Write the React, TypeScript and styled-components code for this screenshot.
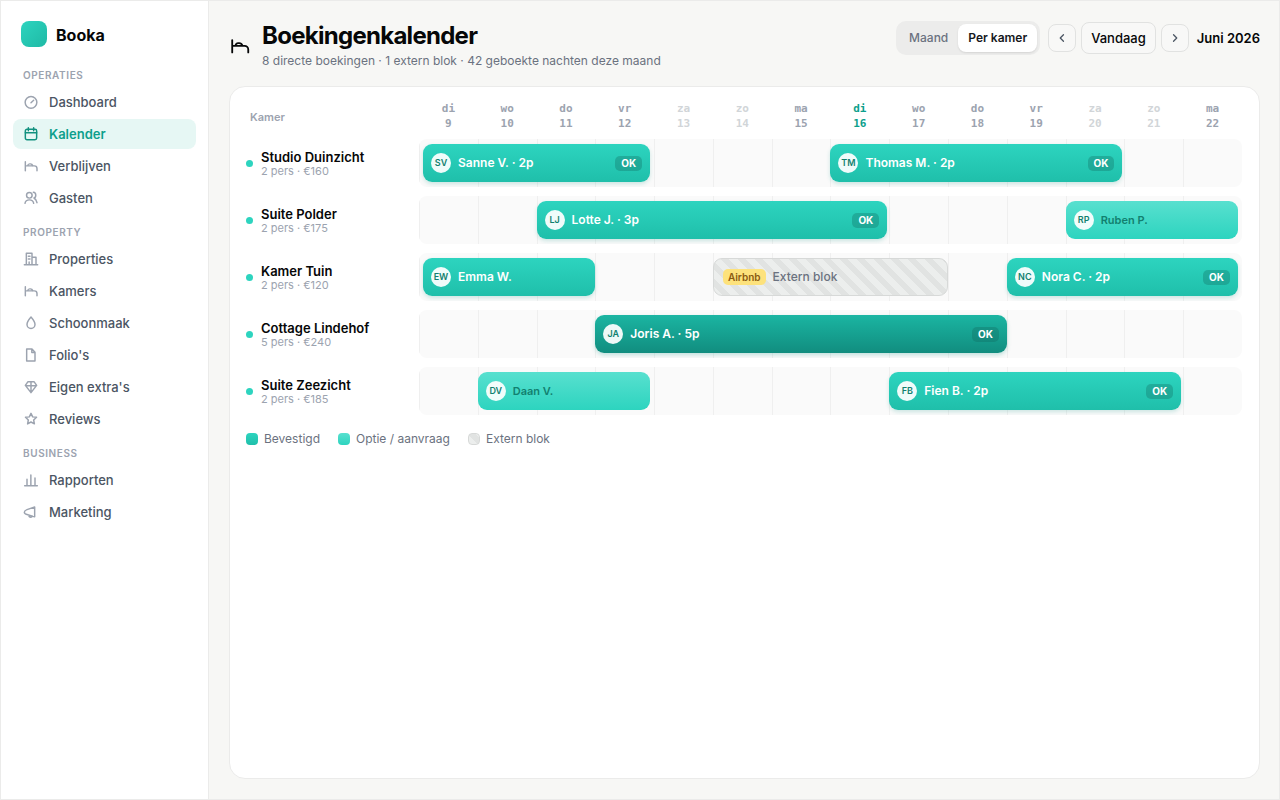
import React from "react";
import styled, { createGlobalStyle, css } from "styled-components";

const GlobalStyle = createGlobalStyle`
  *, *::before, *::after { box-sizing: border-box; }
  body {
    margin: 0;
    background: #f7f7f5;
    color: #060708;
    font-family: Inter, "Open Sans", "Liberation Sans", sans-serif;
    font-size: 13px;
    line-height: 20px;
  }
  button { font: inherit; color: inherit; cursor: pointer; margin: 0; }
  h1, h2, p, ul { margin: 0; padding: 0; }
`;

const Shell = styled.div`
  display: grid;
  grid-template-columns: 208px minmax(0, 1fr);
  min-height: 100vh;
  border: 1px solid #ebebea;
`;

const Sidebar = styled.aside`
  background: #fff;
  border-right: 1px solid #ebebea;
  padding: 20px 12px;
`;

const Brand = styled.div`
  display: flex;
  align-items: center;
  gap: 9px;
  padding: 0 8px;
  margin-bottom: 18px;
  font-size: 16px;
  line-height: 28px;
  font-weight: 700;
`;

const BrandMark = styled.span`
  align-self: flex-start;
  width: 26px;
  height: 26px;
  border-radius: 8px;
  background: linear-gradient(135deg, #2dd4bf, #1fb9a5);
`;

const NavSection = styled.section`
  & + & { margin-top: 11px; }
`;

const NavHeading = styled.h2`
  padding: 0 10px;
  margin-bottom: 4px;
  font-size: 10px;
  line-height: 16px;
  font-weight: 600;
  letter-spacing: 0.06em;
  text-transform: uppercase;
  color: #9ca3af;
`;

const NavList = styled.ul`
  display: flex;
  flex-direction: column;
  gap: 2px;
  list-style: none;
`;

const NavLink = styled.a<{ $active?: boolean }>`
  display: flex;
  align-items: center;
  gap: 10px;
  height: 30px;
  padding: 0 10px;
  border-radius: 8px;
  font-size: 13px;
  text-decoration: none;
  color: ${(p) => (p.$active ? "#0d9f8c" : "#4b5563")};
  font-weight: ${(p) => (p.$active ? 600 : 500)};
  background: ${(p) => (p.$active ? "#e6f7f4" : "transparent")};
  svg { color: ${(p) => (p.$active ? "#12917f" : "#9ca3af")}; flex: none; }
`;

const Main = styled.main`
  display: flex;
  flex-direction: column;
  padding: 20px 19px 20px 20px;
`;

const PageHeader = styled.header`
  display: flex;
  align-items: flex-start;
  justify-content: space-between;
  gap: 16px;
  margin-bottom: 15px;
`;

const Heading = styled.div`
  display: flex;
  align-items: center;
  gap: 11px;
`;

const Title = styled.h1`
  font-size: 24px;
  line-height: 30px;
  font-weight: 700;
  letter-spacing: -0.03em;
`;

const Subtitle = styled.p`
  font-size: 12px;
  line-height: 20px;
  color: #6b7280;
`;

const Toolbar = styled.div`
  display: flex;
  align-items: center;
  gap: 8px;
`;

const Segmented = styled.div`
  display: flex;
  padding: 3px;
  border-radius: 10px;
  background: #ececeb;
`;

const Segment = styled.button<{ $active?: boolean }>`
  height: 28px;
  padding: 0 10px;
  border: 0;
  border-radius: 8px;
  font-size: 12px;
  font-weight: ${(p) => (p.$active ? 600 : 500)};
  color: ${(p) => (p.$active ? "#16181c" : "#6b7280")};
  background: ${(p) => (p.$active ? "#fff" : "transparent")};
  box-shadow: ${(p) => (p.$active ? "0 1px 2px rgba(0, 0, 0, 0.1)" : "none")};
`;

const Stepper = styled.div`
  display: flex;
  align-items: center;
  gap: 5px;
`;

const outlined = css`
  border: 1px solid #e1e2e1;
  border-radius: 8px;
  background: #f8f8f7;
`;

const ArrowButton = styled.button`
  ${outlined}
  display: grid;
  place-items: center;
  width: 28px;
  height: 28px;
  padding: 0;
  color: #4b5563;
`;

const TodayButton = styled.button`
  ${outlined}
  height: 32px;
  padding: 0 9px;
  font-size: 13px;
  font-weight: 500;
`;

const Month = styled.span`
  font-size: 13px;
  font-weight: 600;
`;

const Card = styled.section`
  flex: 1;
  padding: 14px 17px 16px 16px;
  border: 1px solid #ebebea;
  border-radius: 16px;
  background: #fff;
`;

const RowLayout = styled.div`
  display: grid;
  grid-template-columns: 173px minmax(0, 1fr);
  align-items: center;
`;

const HeadRow = styled(RowLayout)`
  margin-bottom: 8px;
`;

const ColumnLabel = styled.span`
  padding: 2px 0 0 4px;
  font-size: 11px;
  font-weight: 600;
  color: #9ca3af;
`;

const Days = styled.div`
  display: grid;
  grid-template-columns: repeat(14, minmax(0, 1fr));
`;

type DayTone = "normal" | "weekend" | "today";
const dayColors: Record<DayTone, string> = {
  normal: "#9ca3af",
  weekend: "#d1d5d8",
  today: "#0d9f8c",
};

const Day = styled.div<{ $tone: DayTone }>`
  font-family: "DejaVu Sans Mono", "Liberation Mono", monospace;
  font-size: 11px;
  line-height: 15px;
  font-weight: 700;
  text-align: center;
  color: ${(p) => dayColors[p.$tone]};
`;

const Rooms = styled.div`
  display: flex;
  flex-direction: column;
  gap: 9px;
`;

const RoomLabel = styled.div`
  display: flex;
  align-items: center;
  gap: 8px;
`;

const Dot = styled.span`
  width: 7px;
  height: 7px;
  border-radius: 50%;
  background: #2dd4bf;
`;

const RoomText = styled.div`
  padding-top: 2px;
`;

const RoomName = styled.div`
  font-size: 13px;
  line-height: 15px;
  font-weight: 600;
`;

const RoomMeta = styled.div`
  font-size: 11px;
  line-height: 13px;
  color: #9ca3af;
`;

const Track = styled.div`
  display: grid;
  grid-template-columns: repeat(14, minmax(0, 1fr));
  grid-template-rows: 48px;
  align-items: center;
  overflow: hidden;
  border-radius: 8px;
  background: #fafafa;
`;

const Slot = styled.span<{ $column: number }>`
  grid-area: 1 / ${(p) => p.$column};
  height: 100%;
  border-left: 1px solid #efefef;
`;

type Kind = "confirmed" | "group" | "option" | "external";

const kindStyles = {
  confirmed: css`
    color: #fff;
    background: linear-gradient(180deg, #2dd4bf, #1fbfaa);
    box-shadow: 0 2px 4px rgba(20, 150, 135, 0.2);
  `,
  group: css`
    color: #fff;
    background: linear-gradient(180deg, #1bb5a2, #118d7f);
    box-shadow: 0 2px 4px rgba(20, 150, 135, 0.25);
  `,
  option: css`
    color: #12806f;
    background: linear-gradient(180deg, #58e0cf, #2dd4bf);
  `,
  external: css`
    color: #6b7280;
    border: 1px solid #d7d9d8;
    background: repeating-linear-gradient(45deg, #eceeed 0 6px, #e1e3e2 6px 12px);
  `,
};

const Bar = styled.button<{ $from: number; $to: number; $start: number; $end: number; $kind: Kind }>`
  grid-area: 1 / ${(p) => p.$from} / 2 / ${(p) => p.$to};
  z-index: 1;
  display: flex;
  align-items: center;
  gap: 7px;
  height: 38px;
  margin: 0 ${(p) => p.$end}px 0 ${(p) => p.$start}px;
  padding: 0 8px;
  border: 0;
  border-radius: 9px;
  text-align: left;
  white-space: nowrap;
  ${(p) => kindStyles[p.$kind]}
`;

const Avatar = styled.span`
  display: grid;
  place-items: center;
  width: 20px;
  height: 20px;
  border-radius: 50%;
  font-size: 9px;
  line-height: 20px;
  font-weight: 600;
  color: #12806f;
  background: rgba(255, 255, 255, 0.93);
`;

const Guest = styled.span<{ $kind: Kind }>`
  flex: 1;
  font-size: ${(p) => (p.$kind === "option" ? 11 : 12)}px;
  font-weight: ${(p) => (p.$kind === "external" ? 500 : 600)};
`;

const Status = styled.span`
  padding: 0 6px;
  border-radius: 5px;
  font-size: 10px;
  line-height: 15px;
  font-weight: 700;
  background: rgba(15, 100, 90, 0.3);
`;

const Source = styled.span`
  margin-left: 1px;
  padding: 0 5px;
  border-radius: 5px;
  font-size: 10px;
  line-height: 16px;
  font-weight: 600;
  color: #8a5a10;
  background: #fde27c;
`;

const Legend = styled.ul`
  display: flex;
  gap: 18px;
  margin-top: 14px;
  list-style: none;
`;

const LegendItem = styled.li`
  display: flex;
  align-items: center;
  gap: 6px;
  font-size: 12px;
  color: #6b7280;
`;

const Swatch = styled.span<{ $kind: Kind }>`
  width: 12px;
  height: 12px;
  border-radius: 4px;
  ${(p) => kindStyles[p.$kind]}
  box-shadow: none;
`;

const shapes = {
  gauge: (
    <>
      <circle cx="12" cy="12.500" r="8.800" />
      <path d="m12 13.200 4-3.700" />
    </>
  ),
  calendar: (
    <>
      <rect x="3.500" y="5" width="17" height="15.500" rx="2.500" />
      <path d="M3.500 10.200h17M8 2.500V7M16 2.500V7" />
    </>
  ),
  bed: <path d="M3.500 5.500V19M3.500 11.800h13.500a4 4 0 0 1 4 4V19M7 11.800c.3-2.200 1.200-3 3-3h1.200c1.800 0 2.800 1 3.600 3" />,
  users: (
    <>
      <circle cx="9.500" cy="8" r="4.200" />
      <path d="M3 20c.6-3.400 2.800-5.200 6.500-5.200S15.400 16.600 16 20M15.500 3.500c4.700.6 4.700 7.500 1 8.500 2.700 1.500 4 4 4.500 7" />
    </>
  ),
  building: <path d="M2 20.500h20M5 20.500V3.500h8.500v17M13.500 9.500h6v11M8 8h2.500M8 12h2.500M9.200 20.500V16.500" />,
  drop: <path d="M12 3C9 6.500 6 10.200 6 14.200a6 6 0 0 0 12 0C18 10.200 15 6.500 12 3Z" />,
  file: <path d="M5.500 3h8l4.500 4.800v13.200h-12.500ZM13.200 3v5.200H18" />,
  gem: <path d="M7.500 4h9l4 5.500L12 20.500 3.500 9.500ZM4 10h16M12 4.500v15" />,
  star: <path d="m12 3.500 2.500 5.300 5.800.7-4.300 4 1.100 5.800L12 16.500l-5.100 2.800L8 13.500l-4.300-4 5.800-.7Z" />,
  chart: <path d="M2.500 20.500h19M6 20v-9M11.800 20V4.500M18 20V9" />,
  megaphone: <path d="M17.500 4.500v14.800L6 15.800c-2.400-.7-4-1.800-4-3.600s1.600-2.900 4-3.800ZM8.500 16.500c.3 2.400 1.300 3.500 3 3.500s2.300-1 2.300-2" />,
  left: <path d="m14.500 6.500-5.500 5.500 5.500 5.500" />,
  right: <path d="m9.500 6.500 5.500 5.500-5.500 5.500" />,
};

type IconName = keyof typeof shapes;

function Icon({ name, size = 16, stroke = 2.2 }: { name: IconName; size?: number; stroke?: number }) {
  return (
    <svg
      width={size}
      height={size}
      viewBox="0 0 24 24"
      fill="none"
      stroke="currentColor"
      strokeWidth={stroke}
      strokeLinecap="round"
      strokeLinejoin="round"
      aria-hidden="true"
    >
      {shapes[name]}
    </svg>
  );
}

const navigation: { heading: string; items: { label: string; icon: IconName; active?: boolean }[] }[] = [
  {
    heading: "Operaties",
    items: [
      { label: "Dashboard", icon: "gauge" },
      { label: "Kalender", icon: "calendar", active: true },
      { label: "Verblijven", icon: "bed" },
      { label: "Gasten", icon: "users" },
    ],
  },
  {
    heading: "Property",
    items: [
      { label: "Properties", icon: "building" },
      { label: "Kamers", icon: "bed" },
      { label: "Schoonmaak", icon: "drop" },
      { label: "Folio's", icon: "file" },
      { label: "Eigen extra's", icon: "gem" },
      { label: "Reviews", icon: "star" },
    ],
  },
  {
    heading: "Business",
    items: [
      { label: "Rapporten", icon: "chart" },
      { label: "Marketing", icon: "megaphone" },
    ],
  },
];

const weekdays = ["di", "wo", "do", "vr", "za", "zo", "ma"];
const days = Array.from({ length: 14 }, (_, i) => {
  const name = weekdays[i % 7];
  const date = 9 + i;
  const tone: DayTone = date === 16 ? "today" : name === "za" || name === "zo" ? "weekend" : "normal";
  return { name, date, tone };
});

type Booking = {
  from: number;
  to: number;
  start?: number;
  end?: number;
  kind: Kind;
  initials?: string;
  label: string;
  source?: string;
};

const rooms: { name: string; meta: string; bookings: Booking[] }[] = [
  {
    name: "Studio Duinzicht",
    meta: "2 pers · €160",
    bookings: [
      { from: 1, to: 5, start: 4, end: 4, kind: "confirmed", initials: "SV", label: "Sanne V. · 2p" },
      { from: 8, to: 13, end: 2, kind: "confirmed", initials: "TM", label: "Thomas M. · 2p" },
    ],
  },
  {
    name: "Suite Polder",
    meta: "2 pers · €175",
    bookings: [
      { from: 3, to: 9, end: 2, kind: "confirmed", initials: "LJ", label: "Lotte J. · 3p" },
      { from: 12, to: 15, end: 4, kind: "option", initials: "RP", label: "Ruben P." },
    ],
  },
  {
    name: "Kamer Tuin",
    meta: "2 pers · €120",
    bookings: [
      { from: 1, to: 4, start: 4, kind: "confirmed", initials: "EW", label: "Emma W." },
      { from: 6, to: 10, kind: "external", source: "Airbnb", label: "Extern blok" },
      { from: 11, to: 15, end: 4, kind: "confirmed", initials: "NC", label: "Nora C. · 2p" },
    ],
  },
  {
    name: "Cottage Lindehof",
    meta: "5 pers · €240",
    bookings: [{ from: 4, to: 11, kind: "group", initials: "JA", label: "Joris A. · 5p" }],
  },
  {
    name: "Suite Zeezicht",
    meta: "2 pers · €185",
    bookings: [
      { from: 2, to: 5, end: 4, kind: "option", initials: "DV", label: "Daan V." },
      { from: 9, to: 14, end: 2, kind: "confirmed", initials: "FB", label: "Fien B. · 2p" },
    ],
  },
];

const legend: { kind: Kind; label: string }[] = [
  { kind: "confirmed", label: "Bevestigd" },
  { kind: "option", label: "Optie / aanvraag" },
  { kind: "external", label: "Extern blok" },
];

export default function App() {
  return (
    <>
      <GlobalStyle />
      <Shell>
        <Sidebar>
          <Brand>
            <BrandMark />
            Booka
          </Brand>
          <nav>
            {navigation.map((section) => (
              <NavSection key={section.heading}>
                <NavHeading>{section.heading}</NavHeading>
                <NavList>
                  {section.items.map((item) => (
                    <li key={item.label}>
                      <NavLink href="#" $active={item.active} aria-current={item.active ? "page" : undefined}>
                        <Icon name={item.icon} />
                        {item.label}
                      </NavLink>
                    </li>
                  ))}
                </NavList>
              </NavSection>
            ))}
          </nav>
        </Sidebar>
        <Main>
          <PageHeader>
            <Heading>
              <Icon name="bed" size={22} stroke={2} />
              <div>
                <Title>Boekingenkalender</Title>
                <Subtitle>8 directe boekingen · 1 extern blok · 42 geboekte nachten deze maand</Subtitle>
              </div>
            </Heading>
            <Toolbar>
              <Segmented>
                <Segment type="button">Maand</Segment>
                <Segment type="button" $active aria-pressed="true">
                  Per kamer
                </Segment>
              </Segmented>
              <Stepper>
                <ArrowButton type="button" aria-label="Vorige">
                  <Icon name="left" size={14} />
                </ArrowButton>
                <TodayButton type="button">Vandaag</TodayButton>
                <ArrowButton type="button" aria-label="Volgende">
                  <Icon name="right" size={14} />
                </ArrowButton>
              </Stepper>
              <Month>Juni 2026</Month>
            </Toolbar>
          </PageHeader>
          <Card>
            <HeadRow>
              <ColumnLabel>Kamer</ColumnLabel>
              <Days>
                {days.map((day) => (
                  <Day key={day.date} $tone={day.tone}>
                    <div>{day.name}</div>
                    <div>{day.date}</div>
                  </Day>
                ))}
              </Days>
            </HeadRow>
            <Rooms>
              {rooms.map((room) => (
                <RowLayout key={room.name}>
                  <RoomLabel>
                    <Dot />
                    <RoomText>
                      <RoomName>{room.name}</RoomName>
                      <RoomMeta>{room.meta}</RoomMeta>
                    </RoomText>
                  </RoomLabel>
                  <Track>
                    {days.map((day, i) => (
                      <Slot key={day.date} $column={i + 1} />
                    ))}
                    {room.bookings.map((b) => (
                      <Bar
                        key={b.label}
                        type="button"
                        $from={b.from}
                        $to={b.to}
                        $start={b.start ?? 0}
                        $end={b.end ?? 0}
                        $kind={b.kind}
                      >
                        {b.source && <Source>{b.source}</Source>}
                        {b.initials && <Avatar>{b.initials}</Avatar>}
                        <Guest $kind={b.kind}>{b.label}</Guest>
                        {b.label.includes("·") && <Status>OK</Status>}
                      </Bar>
                    ))}
                  </Track>
                </RowLayout>
              ))}
            </Rooms>
            <Legend>
              {legend.map((item) => (
                <LegendItem key={item.kind}>
                  <Swatch $kind={item.kind} />
                  {item.label}
                </LegendItem>
              ))}
            </Legend>
          </Card>
        </Main>
      </Shell>
    </>
  );
}
